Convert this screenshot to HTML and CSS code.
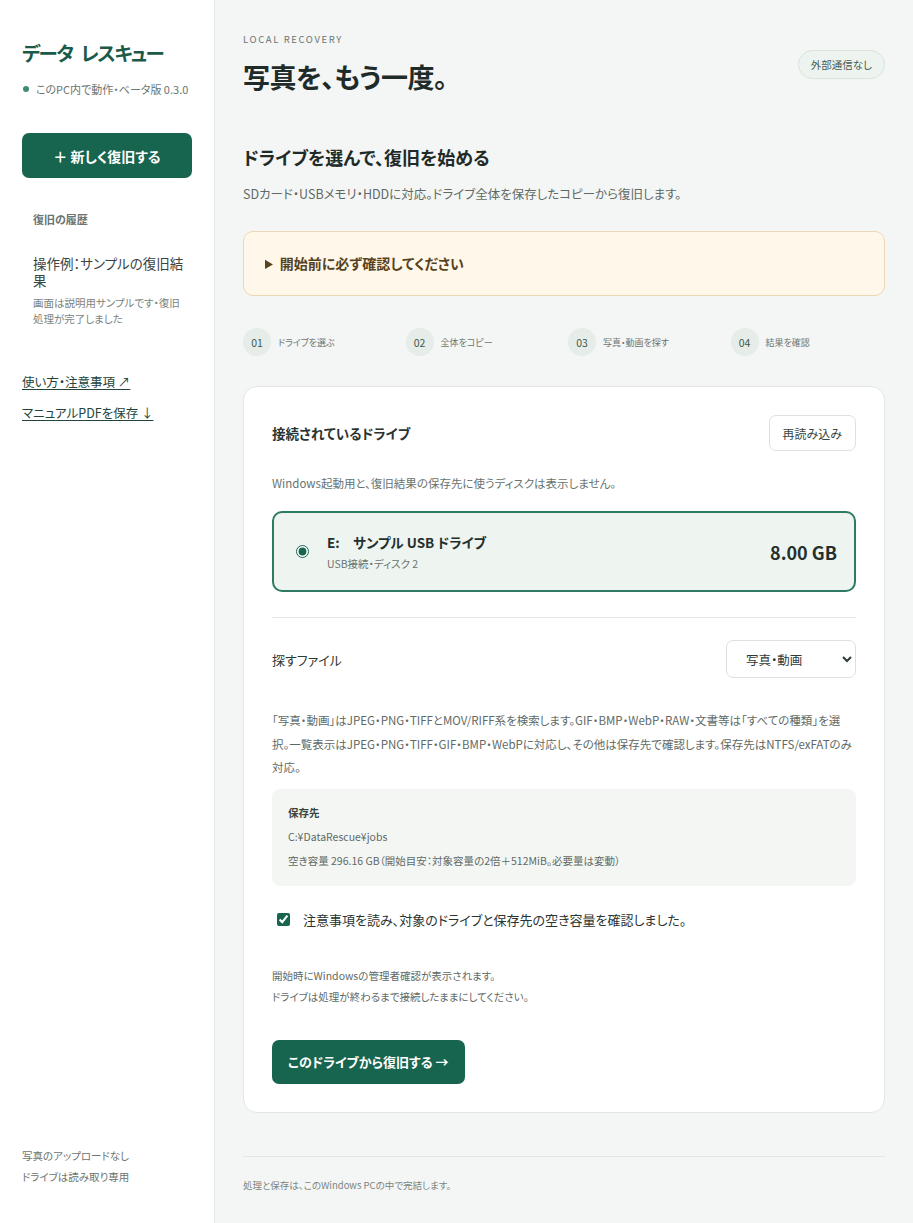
FILE: index.html
```html
<!DOCTYPE html>
<html lang="ja">
<head>
<meta charset="utf-8">
<title>データ レスキュー</title>
<link rel="stylesheet" href="styles.css">
</head>
<body>
<div class="app">
  <aside class="sidebar">
    <div class="brand">データ&ensp;レスキュー</div>
    <div class="status"><span class="dot"></span>このPC内で動作・ベータ版 0.3.0</div>
    <button class="new-btn">＋ 新しく復旧する</button>
    <section class="history">
      <div class="history-label">復旧の履歴</div>
      <div class="history-title">操作例：サンプルの復旧結果</div>
      <div class="history-desc">画面は説明用サンプルです・復旧処理が完了しました</div>
    </section>
    <nav class="side-links">
      <a href="#" class="side-link">使い方・注意事項 ↗</a>
      <a href="#" class="side-link">マニュアルPDFを保存 ↓</a>
    </nav>
    <div class="side-foot">
      <div>写真のアップロードなし</div>
      <div>ドライブは読み取り専用</div>
    </div>
  </aside>

  <main class="main">
    <header class="page-head">
      <div>
        <div class="eyebrow">LOCAL RECOVERY</div>
        <h1 class="page-title">写真を、もう一度。</h1>
      </div>
      <span class="badge">外部通信なし</span>
    </header>

    <h2 class="section-title">ドライブを選んで、復旧を始める</h2>
    <p class="section-sub">SDカード・USBメモリ・HDDに対応。ドライブ全体を保存したコピーから復旧します。</p>

    <details class="notice">
      <summary>開始前に必ず確認してください</summary>
    </details>

    <ol class="steps">
      <li class="step"><span class="step-num">01</span><span class="step-label">ドライブを選ぶ</span></li>
      <li class="step"><span class="step-num">02</span><span class="step-label">全体をコピー</span></li>
      <li class="step"><span class="step-num">03</span><span class="step-label">写真・動画を探す</span></li>
      <li class="step"><span class="step-num">04</span><span class="step-label">結果を確認</span></li>
    </ol>

    <section class="card">
      <div class="card-head">
        <h3 class="card-title">接続されているドライブ</h3>
        <button class="ghost-btn">再読み込み</button>
      </div>
      <p class="card-note">Windows起動用と、復旧結果の保存先に使うディスクは表示しません。</p>

      <label class="drive">
        <input type="radio" name="drive" class="drive-radio" checked>
        <span class="drive-info">
          <span class="drive-name">E:　サンプル USB ドライブ</span>
          <span class="drive-meta">USB接続・ディスク 2</span>
        </span>
        <span class="drive-size">8.00 GB</span>
      </label>

      <hr class="divider">

      <div class="file-row">
        <span class="file-label">探すファイル</span>
        <select class="file-select">
          <option>写真・動画</option>
          <option>すべての種類</option>
        </select>
      </div>

      <p class="file-desc">「写真・動画」はJPEG・PNG・TIFFとMOV/RIFF系を検索します。GIF・BMP・WebP・RAW・文書等は「すべての種類」を選択。一覧表示はJPEG・PNG・TIFF・GIF・BMP・WebPに対応し、その他は保存先で確認します。保存先はNTFS/exFATのみ対応。</p>

      <div class="dest">
        <div class="dest-title">保存先</div>
        <div>C:¥DataRescue¥jobs</div>
        <div>空き容量 296.16 GB（開始目安：対象容量の2倍＋512MiB。必要量は変動）</div>
      </div>

      <label class="confirm">
        <input type="checkbox" class="confirm-box" checked>
        <span>注意事項を読み、対象のドライブと保存先の空き容量を確認しました。</span>
      </label>

      <div class="notes">
        <div>開始時にWindowsの管理者確認が表示されます。</div>
        <div>ドライブは処理が終わるまで接続したままにしてください。</div>
      </div>

      <button class="primary-btn">このドライブから復旧する →</button>
    </section>

    <footer class="page-foot">処理と保存は、このWindows PCの中で完結します。</footer>
  </main>
</div>
</body>
</html>
```

FILE: styles.css
```css
* { box-sizing: border-box; }

html, body {
  margin: 0;
  padding: 0;
}

body {
  font-family: "Noto Sans CJK JP", "Noto Sans", sans-serif;
  font-feature-settings: "palt";
  color: #27332f;
  background: #f4f6f5;
}

.app {
  display: flex;
  min-height: 100vh;
}

/* Sidebar */
.sidebar {
  width: 215px;
  flex: none;
  background: #ffffff;
  border-right: 1px solid #e3e7e5;
  padding: 39px 22px 37px 22px;
  display: flex;
  flex-direction: column;
  min-height: 100vh;
}

.brand {
  font-size: 19.5px;
  line-height: 28px;
  font-weight: 700;
  color: #1b5a49;
  letter-spacing: -1.5px;
}

.status {
  margin-top: 14px;
  display: flex;
  align-items: center;
  gap: 7px;
  font-size: 11px;
  line-height: 16px;
  color: #6b7571;
}

.dot {
  width: 6px;
  height: 6px;
  border-radius: 50%;
  background: #3e8c6d;
  margin-left: 1px;
}

.new-btn {
  margin-top: 36px;
  height: 45px;
  width: 100%;
  border: 0;
  border-radius: 7px;
  background: #17654f;
  color: #ffffff;
  font-family: inherit;
  font-feature-settings: "palt";
  font-size: 14px;
  font-weight: 700;
}

.history {
  margin-top: 33px;
  padding: 0 8px 0 11px;
}

.history-label {
  font-size: 11px;
  line-height: 16px;
  font-weight: 700;
  color: #6b7571;
}

.history-title {
  margin-top: 28px;
  font-size: 13.5px;
  line-height: 17px;
  color: #3a4441;
}

.history-desc {
  margin-top: 6px;
  font-size: 10.5px;
  line-height: 16px;
  color: #7a8480;
}

.side-links {
  margin-top: 46px;
  display: flex;
  flex-direction: column;
  gap: 13px;
}

.side-link {
  font-size: 12.5px;
  line-height: 18px;
  color: #23443a;
  text-decoration: underline;
  text-underline-offset: 2px;
}

.side-foot {
  margin-top: auto;
  font-size: 10.5px;
  line-height: 21px;
  color: #6b7571;
}

/* Main */
.main {
  flex: 1;
  padding: 32px 28px 32px 28px;
  min-width: 0;
}

.page-head {
  display: flex;
  justify-content: space-between;
  align-items: center;
}

.eyebrow {
  font-size: 9.5px;
  line-height: 14px;
  letter-spacing: 1.6px;
  color: #6b7571;
}

.page-title {
  margin: 11px 0 0 0;
  font-size: 27px;
  line-height: 40px;
  font-weight: 700;
  letter-spacing: -0.5px;
  color: #1f2b28;
}

.badge {
  display: inline-flex;
  align-items: center;
  height: 29px;
  padding: 0 12px;
  border-radius: 15px;
  border: 1px solid #d9e3dc;
  background: #edf3ee;
  font-size: 10.5px;
  color: #485b53;
}

.section-title {
  margin: 47px 0 0 0;
  font-size: 18px;
  line-height: 26px;
  font-weight: 700;
  color: #1f2b28;
}

.section-sub {
  margin: 14px 0 0 0;
  font-size: 12.5px;
  line-height: 20px;
  color: #5f6a66;
}

.notice {
  margin-top: 27px;
  background: #fff8ea;
  border: 1px solid #e9d8b3;
  border-radius: 10px;
  padding: 21px 21px 22px 21px;
}

.notice summary {
  font-size: 14px;
  line-height: 20px;
  font-weight: 700;
  color: #57431f;
  cursor: pointer;
}

.steps {
  list-style: none;
  margin: 32px 0 0 0;
  padding: 0;
  display: grid;
  grid-template-columns: repeat(4, 1fr);
  gap: 8px;
}

.step {
  display: flex;
  align-items: center;
  gap: 7px;
}

.step-num {
  width: 28px;
  height: 28px;
  border-radius: 50%;
  background: #e6ece8;
  display: flex;
  align-items: center;
  justify-content: center;
  font-size: 10.5px;
  color: #3d5a4f;
}

.step-label {
  font-size: 9px;
  color: #6b7571;
}

/* Card */
.card {
  margin-top: 30px;
  background: #ffffff;
  border: 1px solid #e2e7e4;
  border-radius: 14px;
  padding: 28px 28px;
}

.card-head {
  display: flex;
  justify-content: space-between;
  align-items: center;
}

.card-title {
  margin: 0;
  font-size: 13.5px;
  font-weight: 700;
  color: #2a3431;
}

.ghost-btn {
  height: 36px;
  padding: 0 13px;
  background: #ffffff;
  border: 1px solid #dce2df;
  border-radius: 7px;
  font-family: inherit;
  font-feature-settings: "palt";
  font-size: 12px;
  color: #3a4642;
}

.card-note {
  margin: 23px 0 0 0;
  font-size: 11.5px;
  line-height: 18px;
  color: #68736f;
}

.drive {
  margin-top: 19px;
  height: 81px;
  display: flex;
  align-items: center;
  background: #eef4f0;
  border: 2px solid #2f7a63;
  border-radius: 10px;
  padding: 0 17px 0 22px;
}

.drive-radio {
  margin: 0;
  width: 13px;
  height: 13px;
  accent-color: #17654f;
}

.drive-info {
  display: flex;
  flex-direction: column;
  margin-left: 18px;
  flex: 1;
}

.drive-name {
  font-size: 13.5px;
  line-height: 20px;
  font-weight: 700;
  color: #24302c;
}

.drive-meta {
  margin-top: 4px;
  font-size: 10.5px;
  line-height: 16px;
  color: #6b7571;
}

.drive-size {
  font-size: 18px;
  font-weight: 700;
  color: #24302c;
}

.divider {
  margin: 25px 0 0 0;
  border: 0;
  border-top: 1px solid #e2e7e4;
}

.file-row {
  margin-top: 22px;
  display: flex;
  justify-content: space-between;
  align-items: center;
}

.file-label {
  font-size: 13px;
  color: #2f3a36;
}

.file-select {
  width: 130px;
  height: 38px;
  padding: 0 10px 0 15px;
  background: #ffffff;
  border: 1px solid #dce2df;
  border-radius: 7px;
  font-family: inherit;
  font-feature-settings: "palt";
  font-size: 12.5px;
  color: #2f3a36;
}

.file-desc {
  margin: 31px 0 0 0;
  font-size: 11.5px;
  line-height: 23.5px;
  color: #5f6a66;
}

.dest {
  margin-top: 9px;
  background: #f4f6f4;
  border-radius: 8px;
  padding: 12px 16px 13px 16px;
  font-size: 10.5px;
  line-height: 24px;
  color: #5f6a66;
}

.dest-title {
  font-weight: 700;
  color: #3a4441;
}

.confirm {
  margin-top: 24px;
  display: flex;
  align-items: center;
  font-size: 13px;
  line-height: 20px;
  color: #2a3431;
}

.confirm-box {
  margin: 0 13px 0 5px;
  width: 13px;
  height: 13px;
  accent-color: #17654f;
}

.notes {
  margin-top: 35px;
  font-size: 10.5px;
  line-height: 21px;
  color: #5f6a66;
}

.primary-btn {
  margin-top: 33px;
  height: 44px;
  padding: 0 16px;
  border: 0;
  border-radius: 7px;
  background: #17654f;
  color: #ffffff;
  font-family: inherit;
  font-feature-settings: "palt";
  font-size: 13px;
  font-weight: 700;
}

.page-foot {
  margin-top: 43px;
  border-top: 1px solid #e1e6e3;
  padding-top: 21px;
  font-size: 9.5px;
  line-height: 14px;
  color: #7b8581;
}
```
